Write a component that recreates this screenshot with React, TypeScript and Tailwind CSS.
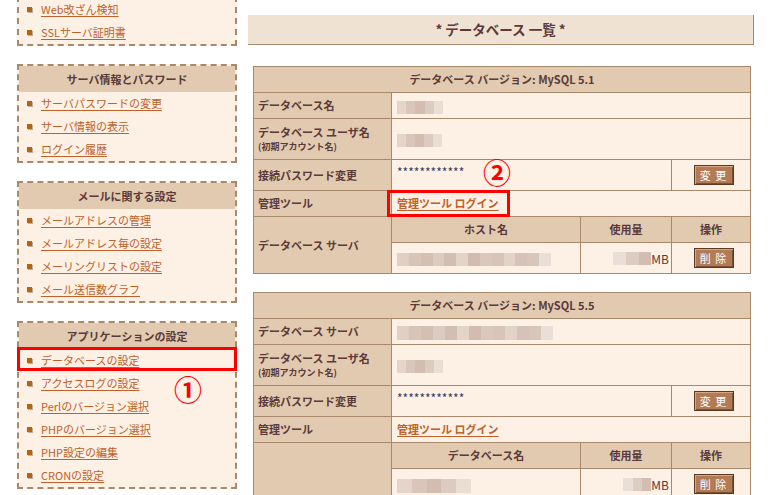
const FONT = "font-['Noto_Sans_CJK_JP','Noto_Sans',sans-serif]"

type Box = { title?: string; items: string[] }

const boxes: Box[] = [
  { items: ['Web改ざん検知', 'SSLサーバ証明書'] },
  { title: 'サーバ情報とパスワード', items: ['サーバパスワードの変更', 'サーバ情報の表示', 'ログイン履歴'] },
  {
    title: 'メールに関する設定',
    items: ['メールアドレスの管理', 'メールアドレス毎の設定', 'メーリングリストの設定', 'メール送信数グラフ'],
  },
  {
    title: 'アプリケーションの設定',
    items: [
      'データベースの設定',
      'アクセスログの設定',
      'Perlのバージョン選択',
      'PHPのバージョン選択',
      'PHP設定の編集',
      'CRONの設定',
    ],
  },
]

function SideBox({ box, first }: { box: Box; first?: boolean }) {
  return (
    <div
      className={`w-[220px] shrink-0 border-2 border-dashed border-[#a8896b] bg-[#fdf1e5] ${
        first ? 'mt-[-4px]' : 'mt-[18px]'
      }`}
    >
      {box.title && (
        <div className="flex h-[26px] items-center justify-center bg-[#e2cab0] text-[11px] font-bold text-[#5a3a3a]">
          {box.title}
        </div>
      )}
      <ul>
        {box.items.map((item) => (
          <li key={item} className="flex h-[23px] items-center pl-[8px]">
            <span className="h-[5px] w-[5px] bg-[#b5650f] shadow-[1px_1px_0_#b9aea4]" />
            <a className="ml-[9px] text-[11px] text-[#c0602a] underline underline-offset-2">{item}</a>
          </li>
        ))}
      </ul>
    </div>
  )
}

function Blur({ w, h = 13, tones }: { w: number; h?: number; tones: string[] }) {
  return (
    <span className="inline-flex align-middle" style={{ width: w, height: h }}>
      {tones.map((t, i) => (
        <span key={i} className="h-full flex-1" style={{ background: t }} />
      ))}
    </span>
  )
}

const light = ['#e4d4c9', '#d9c5b9', '#d3bcb0', '#dccbc0', '#e9ddd4']
const longTones = [
  '#e1cfc4', '#d8c5ba', '#d4bfb3', '#dccbc0', '#d3beb3', '#e3d3c9', '#d2bcb1',
  '#dac8bd', '#d8c4b9', '#e2d2c8', '#d6c2b8', '#d9c6bb', '#eadfd7',
]

const th = 'border border-[#a8896b] bg-[#e2cab0] text-[11px] font-bold text-[#5a3a3a]'
const label = 'border border-[#a8896b] bg-[#e2cab0] pl-[4px] text-left text-[11px] font-bold text-[#5a3a3a]'
const cell = 'border border-[#a8896b] bg-[#fdf1e5] pl-[5px] text-[11px]'

function Btn({ text }: { text: string }) {
  return (
    <button className="h-[20px] w-[40px] border border-[#5c3a22] bg-[#b27b55] text-[11px] tracking-[1px] text-white shadow-[inset_1px_1px_0_#d8a683,inset_-1px_-1px_0_#7c5034]">
      {text}
    </button>
  )
}

function UserLabel() {
  return (
    <td className={label}>
      <div className="leading-[16px]">データベース ユーザ名</div>
      <div className="text-[9px] leading-[14px]">(初期アカウント名)</div>
    </td>
  )
}

function Usage({ w }: { w: number }) {
  return (
    <td className={`${cell} pr-[2px] text-right text-[12px] text-[#5a3a3a]`}>
      <Blur w={w} tones={['#eadfd7', '#ddccc2', '#d3bdb2']} />
      <span className="align-middle">MB</span>
    </td>
  )
}

function Cols() {
  return (
    <colgroup>
      <col className="w-[138px]" />
      <col className="w-[189px]" />
      <col className="w-[91px]" />
      <col className="w-[79px]" />
    </colgroup>
  )
}

function Password() {
  return (
    <tr className="h-[31px]">
      <td className={label}>接続パスワード変更</td>
      <td colSpan={2} className={`${cell} align-top pt-[5px] text-[12px] leading-[14px] text-[#3a3a5a]`}>
        ************
      </td>
      <td className={`${cell} pl-0 text-center`}>
        <Btn text="変 更" />
      </td>
    </tr>
  )
}

function Tool() {
  return (
    <tr className="h-[26px]">
      <td className={label}>管理ツール</td>
      <td colSpan={3} className={cell}>
        <a className="font-bold text-[#c0602a] underline underline-offset-2">管理ツール ログイン</a>
      </td>
    </tr>
  )
}

function Table1() {
  return (
    <table className="w-[497px] table-fixed border-collapse">
      <Cols />
      <tbody>
        <tr className="h-[26px]">
          <th colSpan={4} className={th}>データベース バージョン: MySQL 5.1</th>
        </tr>
        <tr className="h-[26px]">
          <td className={label}>データベース名</td>
          <td colSpan={3} className={cell}><Blur w={46} tones={light} /></td>
        </tr>
        <tr className="h-[41px]">
          <UserLabel />
          <td colSpan={3} className={cell}><Blur w={45} tones={light} /></td>
        </tr>
        <Password />
        <Tool />
        <tr className="h-[26px]">
          <td rowSpan={2} className={label}>データベース サーバ</td>
          <th className={th}>ホスト名</th>
          <th className={th}>使用量</th>
          <th className={th}>操作</th>
        </tr>
        <tr className="h-[31px]">
          <td className={cell}><Blur w={154} tones={longTones} /></td>
          <Usage w={38} />
          <td className={`${cell} pl-0 text-center`}><Btn text="削 除" /></td>
        </tr>
      </tbody>
    </table>
  )
}

function Table2() {
  return (
    <table className="mt-[18px] w-[497px] table-fixed border-collapse">
      <Cols />
      <tbody>
        <tr className="h-[26px]">
          <th colSpan={4} className={th}>データベース バージョン: MySQL 5.5</th>
        </tr>
        <tr className="h-[26px]">
          <td className={label}>データベース サーバ</td>
          <td colSpan={3} className={cell}><Blur w={156} h={14} tones={longTones} /></td>
        </tr>
        <tr className="h-[41px]">
          <UserLabel />
          <td colSpan={3} className={cell}><Blur w={46} tones={light} /></td>
        </tr>
        <Password />
        <Tool />
        <tr className="h-[26px]">
          <td rowSpan={2} className={label}></td>
          <th className={th}>データベース名</th>
          <th className={th}>使用量</th>
          <th className={th}>操作</th>
        </tr>
        <tr className="h-[31px]">
          <td className={cell}><Blur w={74} h={14} tones={light} /></td>
          <Usage w={28} />
          <td className={`${cell} pl-0 text-center`}><Btn text="削 除" /></td>
        </tr>
      </tbody>
    </table>
  )
}

export default function App() {
  return (
    <div className={`relative flex h-[495px] w-[770px] overflow-hidden bg-white ${FONT}`}>
      <div className="ml-[17px] flex w-[220px] flex-col">
        {boxes.map((b, i) => (
          <SideBox key={i} box={b} first={i === 0} />
        ))}
      </div>

      <div className="ml-[11px] flex flex-col">
        <div className="mt-[15px] flex h-[30px] w-[506px] shrink-0 items-center justify-center border-b border-r border-[#a8896b] bg-[#f0e2d2] text-[13.5px] font-bold text-[#5a3a3a]">
          * データベース 一覧 *
        </div>
        <div className="ml-[5px] mt-[21px] shrink-0">
          <Table1 />
          <Table2 />
        </div>
      </div>

      {/* annotations */}
      <div className="absolute left-[17px] top-[347px] h-[24px] w-[220px] border-[3px] border-[#ff0000]" />
      <div className="absolute left-[387px] top-[190px] h-[27px] w-[123px] border-[3px] border-[#ff0000]" />
      <span className="absolute left-[174px] top-[375px] text-[28px] font-bold leading-[28px] text-[#ff0000]">①</span>
      <span className="absolute left-[483px] top-[158px] text-[28px] font-bold leading-[28px] text-[#ff0000]">②</span>
    </div>
  )
}
